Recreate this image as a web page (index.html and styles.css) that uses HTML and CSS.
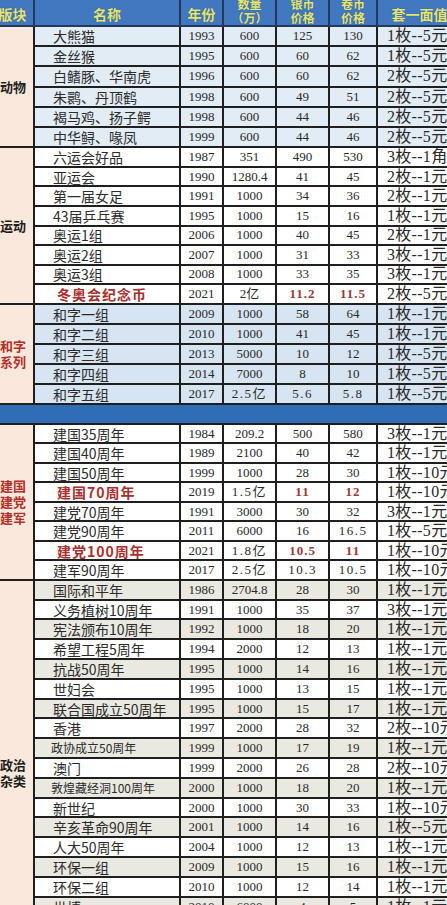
FILE: index.html
```html
<!DOCTYPE html>
<html lang="zh">
<head>
<meta charset="utf-8">
<link rel="stylesheet" href="styles.css">
</head>
<body>
<div class="sheet">
<table class="coins">
  <colgroup>
    <col class="c-cat"><col class="c-name"><col class="c-year"><col class="c-qty"><col class="c-silver"><col class="c-roll"><col class="c-face">
  </colgroup>
  <thead>
    <tr class="head">
      <th>版块</th><th>名称</th><th>年份</th><th class="two">数量<br>（万）</th><th class="two">银币<br>价格</th><th class="two">卷币<br>价格</th><th>套一面值</th>
    </tr>
  </thead>
  <tbody class="g-animal">
    <tr><td class="cat" rowspan="6">动物</td><td class="name">大熊猫</td><td>1993</td><td>600</td><td>125</td><td>130</td><td class="face">1枚--5元</td></tr>
    <tr><td class="name">金丝猴</td><td>1995</td><td>600</td><td>60</td><td>62</td><td class="face">1枚--5元</td></tr>
    <tr><td class="name">白鳍豚、华南虎</td><td>1996</td><td>600</td><td>60</td><td>62</td><td class="face">2枚--5元</td></tr>
    <tr><td class="name">朱鹮、丹顶鹤</td><td>1998</td><td>600</td><td>49</td><td>51</td><td class="face">2枚--5元</td></tr>
    <tr><td class="name">褐马鸡、扬子鳄</td><td>1998</td><td>600</td><td>44</td><td>46</td><td class="face">2枚--5元</td></tr>
    <tr><td class="name">中华鲟、喙凤</td><td>1999</td><td>600</td><td>44</td><td>46</td><td class="face">2枚--5元</td></tr>
  </tbody>
  <tbody class="g-sport">
    <tr><td class="cat" rowspan="8">运动</td><td class="name">六运会好品</td><td>1987</td><td>351</td><td>490</td><td>530</td><td class="face">3枚--1角</td></tr>
    <tr><td class="name">亚运会</td><td>1990</td><td>1280.4</td><td>41</td><td>45</td><td class="face">2枚--1元</td></tr>
    <tr><td class="name">第一届女足</td><td>1991</td><td>1000</td><td>34</td><td>36</td><td class="face">2枚--1元</td></tr>
    <tr><td class="name">43届乒乓赛</td><td>1995</td><td>1000</td><td>15</td><td>16</td><td class="face">1枚--1元</td></tr>
    <tr><td class="name">奥运1组</td><td>2006</td><td>1000</td><td>40</td><td>45</td><td class="face">2枚--1元</td></tr>
    <tr><td class="name">奥运2组</td><td>2007</td><td>1000</td><td>31</td><td>33</td><td class="face">3枚--1元</td></tr>
    <tr><td class="name">奥运3组</td><td>2008</td><td>1000</td><td>33</td><td>35</td><td class="face">3枚--1元</td></tr>
    <tr><td class="name hot">冬奥会纪念币</td><td>2021</td><td>2亿</td><td class="hotnum">11.2</td><td class="hotnum">11.5</td><td class="face">2枚--5元</td></tr>
  </tbody>
  <tbody class="g-he">
    <tr><td class="cat red" rowspan="5">和字<br>系列</td><td class="name">和字一组</td><td>2009</td><td>1000</td><td>58</td><td>64</td><td class="face">1枚--1元</td></tr>
    <tr><td class="name">和字二组</td><td>2010</td><td>1000</td><td>41</td><td>45</td><td class="face">1枚--1元</td></tr>
    <tr><td class="name">和字三组</td><td>2013</td><td>5000</td><td>10</td><td>12</td><td class="face">1枚--5元</td></tr>
    <tr><td class="name">和字四组</td><td>2014</td><td>7000</td><td>8</td><td>10</td><td class="face">1枚--5元</td></tr>
    <tr><td class="name">和字五组</td><td>2017</td><td class="wide">2.5亿</td><td class="wide">5.6</td><td class="wide">5.8</td><td class="face">1枚--5元</td></tr>
  </tbody>
  <tbody class="g-band">
    <tr><td colspan="7"></td></tr>
  </tbody>
  <tbody class="g-nation">
    <tr><td class="cat red" rowspan="8">建国<br>建党<br>建军</td><td class="name">建国35周年</td><td>1984</td><td>209.2</td><td>500</td><td>580</td><td class="face">3枚--1元</td></tr>
    <tr><td class="name">建国40周年</td><td>1989</td><td>2100</td><td>40</td><td>42</td><td class="face">1枚--1元</td></tr>
    <tr><td class="name">建国50周年</td><td>1999</td><td>1000</td><td>28</td><td>30</td><td class="face">1枚--10元</td></tr>
    <tr><td class="name hot">建国70周年</td><td>2019</td><td class="wide">1.5亿</td><td class="hotnum">11</td><td class="hotnum">12</td><td class="face">1枚--10元</td></tr>
    <tr><td class="name">建党70周年</td><td>1991</td><td>3000</td><td>30</td><td>32</td><td class="face">3枚--1元</td></tr>
    <tr><td class="name">建党90周年</td><td>2011</td><td>6000</td><td>16</td><td class="wide">16.5</td><td class="face">1枚--5元</td></tr>
    <tr><td class="name hot">建党100周年</td><td>2021</td><td class="wide">1.8亿</td><td class="hotnum">10.5</td><td class="hotnum">11</td><td class="face">1枚--10元</td></tr>
    <tr><td class="name">建军90周年</td><td>2017</td><td class="wide">2.5亿</td><td class="wide">10.3</td><td class="wide">10.5</td><td class="face">1枚--10元</td></tr>
  </tbody>
  <tbody class="g-misc">
    <tr><td class="cat low" rowspan="17">政治<br>杂类</td><td class="name">国际和平年</td><td>1986</td><td>2704.8</td><td>28</td><td>30</td><td class="face">1枚--1元</td></tr>
    <tr><td class="name">义务植树10周年</td><td>1991</td><td>1000</td><td>35</td><td>37</td><td class="face">3枚--1元</td></tr>
    <tr><td class="name">宪法颁布10周年</td><td>1992</td><td>1000</td><td>18</td><td>20</td><td class="face">1枚--1元</td></tr>
    <tr><td class="name">希望工程5周年</td><td>1994</td><td>2000</td><td>12</td><td>13</td><td class="face">1枚--1元</td></tr>
    <tr><td class="name">抗战50周年</td><td>1995</td><td>1000</td><td>14</td><td>16</td><td class="face">1枚--1元</td></tr>
    <tr><td class="name">世妇会</td><td>1995</td><td>1000</td><td>13</td><td>15</td><td class="face">1枚--1元</td></tr>
    <tr><td class="name">联合国成立50周年</td><td>1995</td><td>1000</td><td>15</td><td>17</td><td class="face">1枚--1元</td></tr>
    <tr><td class="name">香港</td><td>1997</td><td>2000</td><td>28</td><td>32</td><td class="face">2枚--10元</td></tr>
    <tr><td class="name small">政协成立50周年</td><td>1999</td><td>1000</td><td>17</td><td>19</td><td class="face">1枚--1元</td></tr>
    <tr><td class="name">澳门</td><td>1999</td><td>2000</td><td>26</td><td>28</td><td class="face">2枚--10元</td></tr>
    <tr><td class="name small">敦煌藏经洞100周年</td><td>2000</td><td>1000</td><td>18</td><td>20</td><td class="face">1枚--1元</td></tr>
    <tr><td class="name">新世纪</td><td>2000</td><td>1000</td><td>30</td><td>33</td><td class="face">1枚--10元</td></tr>
    <tr><td class="name">辛亥革命90周年</td><td>2001</td><td>1000</td><td>14</td><td>16</td><td class="face">1枚--5元</td></tr>
    <tr><td class="name">人大50周年</td><td>2004</td><td>1000</td><td>12</td><td>13</td><td class="face">1枚--1元</td></tr>
    <tr><td class="name">环保一组</td><td>2009</td><td>1000</td><td>15</td><td>16</td><td class="face">1枚--1元</td></tr>
    <tr><td class="name">环保二组</td><td>2010</td><td>1000</td><td>12</td><td>14</td><td class="face">1枚--1元</td></tr>
    <tr><td class="name">世博</td><td>2010</td><td>6000</td><td>4</td><td>5</td><td class="face">1枚--1元</td></tr>
  </tbody>
</table>
</div>
</body>
</html>
```
FILE: styles.css
```css
html, body {
  margin: 0;
  padding: 0;
  background: #ffffff;
  overflow: hidden;
}

.sheet {
  width: 447px;
  height: 905px;
  overflow: hidden;
}

.coins {
  border-collapse: collapse;
  table-layout: fixed;
  width: 471px;
  margin-left: -10px;
  margin-top: -5px;
  font-family: "Liberation Serif", "Noto Sans CJK SC", serif;
  font-size: 13px;
  color: #2a2a2a;
}

.c-cat { width: 43px; }
.c-name { width: 146px; }
.c-year { width: 43px; }
.c-qty { width: 53px; }
.c-silver { width: 53px; }
.c-roll { width: 48px; }
.c-face { width: 85px; }

.coins td, .coins th {
  border: 2px solid #1f1f1f;
  padding: 0;
  text-align: center;
  vertical-align: middle;
  white-space: nowrap;
  overflow: hidden;
  line-height: 16px;
}

.head th {
  height: 29px;
  box-sizing: border-box;
  background: #4178bf;
  color: #e6e56f;
  font-family: "Noto Sans CJK SC", sans-serif;
  font-weight: 700;
  font-size: 14px;
  line-height: 18px;
  vertical-align: bottom;
  padding-bottom: 2px;
  text-shadow: 0 0 1px #2c4f80;
  border-color: #233a5c;
}

.head th.two {
  font-size: 12px;
  line-height: 14px;
  padding-bottom: 0;
}

.cat {
  background: #fbe8dc;
  font-family: "Noto Sans CJK SC", sans-serif;
  font-weight: 700;
  font-size: 13px;
  line-height: 18px;
  color: #1e1e1e;
  padding-left: 8px !important;
  text-align: left !important;
  white-space: normal;
}

.cat.red { color: #b3302b; }

.cat.low {
  vertical-align: top !important;
}

.name {
  text-align: left !important;
  padding-left: 18px !important;
  font-family: "Noto Sans CJK SC", sans-serif;
  font-size: 14px;
  color: #2b2b2b;
}

.name.hot {
  padding-left: 22px !important;
  color: #a8302e;
  font-weight: 700;
  letter-spacing: 1px;
}

.name.small {
  font-size: 12px;
  padding-left: 16px !important;
}

.hotnum {
  font-weight: 700;
  color: #9a3a3a;
  letter-spacing: 1px;
}

.wide { letter-spacing: 1.5px; }

.face {
  font-family: "Liberation Serif", "Noto Sans CJK SC", serif;
  font-size: 16px;
  text-align: left !important;
  padding-left: 9px !important;
  letter-spacing: 0.3px;
}

.g-animal tr { height: 20.2px; }
.g-animal td { background: #e2ecf5; }
.g-animal td.cat { background: #fbe8dc; }

.g-sport tr { height: 19.6px; }
.g-sport td { background: #ffffff; }
.g-sport td.cat { background: #fbe8dc; }

.g-he tr { height: 20px; }
.g-he td { background: #d6e5f1; }
.g-he td.cat { background: #fbe8dc; }

.g-band tr { height: 20px; }
.g-band td {
  background: #2f6db7;
  border-left: none;
  border-right: none;
}

.g-nation tr { height: 19.5px; }
.g-nation td { background: #ffffff; }
.g-nation td.cat { background: #fbe8dc; }

.g-misc tr { height: 19.8px; }
.g-misc tr:nth-child(odd) td { background: #eae9e1; }
.g-misc tr:nth-child(even) td { background: #ffffff; }
.g-misc td.cat {
  background: #fbe8dc !important;
  padding-top: 176px !important;
}
```
